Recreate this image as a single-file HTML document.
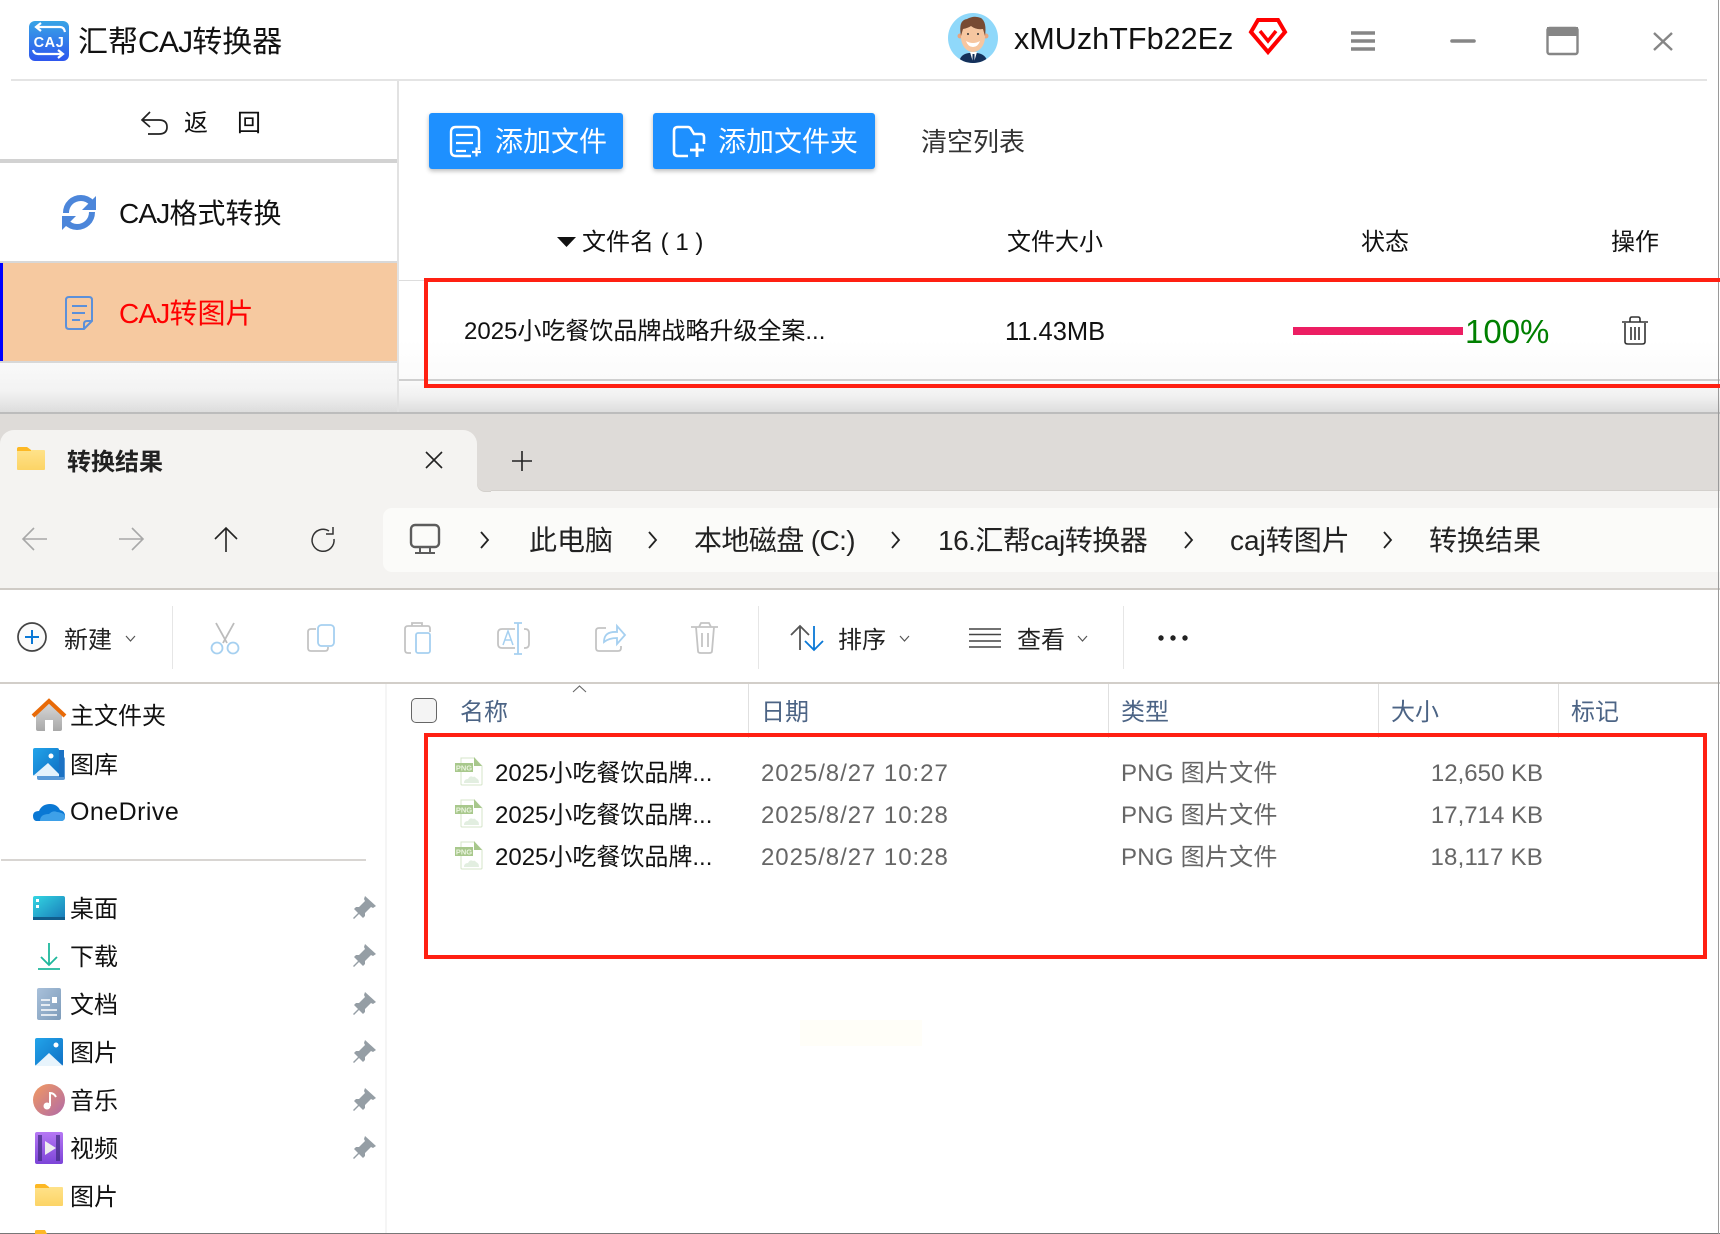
<!DOCTYPE html>
<html lang="zh"><head><meta charset="utf-8"><title>汇帮CAJ转换器</title>
<style>
html,body{margin:0;padding:0;background:#fff}
#p{position:relative;width:1720px;height:1234px;overflow:hidden;background:#fff;font-family:"Liberation Sans","Noto Sans CJK SC",sans-serif;color:#111}
.t{position:absolute;white-space:nowrap;line-height:1}
.b{position:absolute}
.n{letter-spacing:-.8px}
svg{position:absolute;left:0;top:0}
</style></head><body><div id="p">
<!-- app backgrounds -->
<div class="b" style="left:11px;top:79px;width:1696px;height:2px;background:#e4e4e4"></div>
<div class="b" style="left:0;top:159px;width:397px;height:4px;background:#d2d2d2"></div>
<div class="b" style="left:0;top:261px;width:397px;height:2px;background:#d8d8d8"></div>
<div class="b" style="left:0;top:263px;width:397px;height:98px;background:#f6c9a0"></div>
<div class="b" style="left:0;top:263px;width:3px;height:98px;background:#0000ff"></div>
<div class="b" style="left:0;top:361px;width:397px;height:2px;background:#d8d8d8"></div>
<div class="b" style="left:0;top:363px;width:397px;height:50px;background:linear-gradient(#f9f9f9,#f3f3f3 55%,#dcdcdc)"></div>
<div class="b" style="left:397px;top:81px;width:2px;height:332px;background:#e2e2e2"></div>
<div class="b" style="left:399px;top:280px;width:1321px;height:1px;background:#ddd"></div>
<div class="b" style="left:399px;top:379px;width:1321px;height:2px;background:#cfcfcf"></div>
<div class="b" style="left:399px;top:381px;width:1321px;height:32px;background:linear-gradient(#fafafa,#f0f0f0 50%,#dcdcdc)"></div>
<div class="b" style="left:399px;top:340px;width:1321px;height:39px;background:linear-gradient(#fff,#fbfbfb)"></div>
<div class="b" style="left:0;top:412px;width:1720px;height:2px;background:#bcbcbc"></div>
<!-- buttons -->
<div class="b" style="left:429px;top:113px;width:194px;height:56px;border-radius:3px;background:#1e90ff;box-shadow:0 2px 5px rgba(0,0,0,.28)"></div>
<div class="b" style="left:653px;top:113px;width:222px;height:56px;border-radius:3px;background:#1e90ff;box-shadow:0 2px 5px rgba(0,0,0,.28)"></div>
<!-- explorer backgrounds -->
<div class="b" style="left:0;top:414px;width:1720px;height:174px;background:#f4f3f1"></div>
<div class="b" style="left:0;top:414px;width:1720px;height:77px;background:#dedbd8"></div>
<div class="b" style="left:0;top:430px;width:477px;height:61px;background:#f4f3f1;border-radius:14px 14px 0 0"></div>
<div class="b" style="left:477px;top:470px;width:14px;height:21px;background:#f4f3f1"></div>
<div class="b" style="left:477px;top:470px;width:14px;height:21px;background:#dedbd8;border-radius:0 0 0 8px;box-shadow:0 1px 0 #d3d0cc"></div>
<div class="b" style="left:491px;top:490px;width:1229px;height:1px;background:#d3d0cc"></div>
<div class="b" style="left:383px;top:508px;width:1345px;height:64px;border-radius:9px;background:#fbfbf9"></div>
<div class="b" style="left:0;top:588px;width:1720px;height:2px;background:#cfcbc6"></div>
<div class="b" style="left:0;top:682px;width:1720px;height:2px;background:#d2cec9"></div>
<div class="b" style="left:172px;top:606px;width:1px;height:63px;background:#e6e6e6"></div>
<div class="b" style="left:758px;top:606px;width:1px;height:63px;background:#e6e6e6"></div>
<div class="b" style="left:1123px;top:606px;width:1px;height:63px;background:#e6e6e6"></div>
<div class="b" style="left:385px;top:684px;width:2px;height:550px;background:#f5f5f5"></div>
<div class="b" style="left:1px;top:859px;width:365px;height:2px;background:#d8d5d2"></div>
<div class="b" style="left:748px;top:684px;width:1px;height:54px;background:#e0e0e0"></div>
<div class="b" style="left:1108px;top:684px;width:1px;height:54px;background:#e0e0e0"></div>
<div class="b" style="left:1378px;top:684px;width:1px;height:54px;background:#e0e0e0"></div>
<div class="b" style="left:1558px;top:684px;width:1px;height:54px;background:#e0e0e0"></div>
<div class="b" style="left:411px;top:698px;width:24px;height:23px;border:1.5px solid #666;border-radius:5px;background:#f4f4f4"></div>
<div class="b" style="left:800px;top:1020px;width:122px;height:26px;background:#fffef8"></div>
<div class="b" style="left:0;top:1233px;width:1720px;height:1px;background:#777"></div>
<div class="b" style="left:1718px;top:0;width:1px;height:1234px;background:#9a9a9a"></div>
<!-- red boxes -->
<div class="b" style="left:424px;top:278px;width:1300px;height:102px;border:4px solid #ff2012"></div>
<div class="b" style="left:424px;top:733px;width:1275px;height:218px;border:4px solid #ff2012"></div>

<!-- texts -->
<span class="t" style="left:78px;top:28px;font-size:30px"><span>汇帮</span><span class="n">CAJ</span>转换器</span>
<span class="t" style="left:184px;top:112px;font-size:24px">返</span>
<span class="t" style="left:237px;top:112px;font-size:24px">回</span>
<span class="t" style="left:119px;top:200px;font-size:28px"><span class="n">CAJ</span>格式转换</span>
<span class="t" style="left:119px;top:300px;font-size:28px;color:#ff0000"><span class="n">CAJ</span>转图片</span>
<span class="t" style="left:495px;top:128px;font-size:28px;color:#fff">添加文件</span>
<span class="t" style="left:718px;top:128px;font-size:28px;color:#fff">添加文件夹</span>
<span class="t" style="left:921px;top:129px;font-size:26px;color:#333">清空列表</span>
<span class="t" style="left:1014px;top:24px;font-size:30.6px">xMUzhTFb22Ez</span>
<span class="t" style="left:582px;top:231px;font-size:24px">文件名 ( 1 )</span>
<span class="t" style="left:1007px;top:231px;font-size:24px">文件大小</span>
<span class="t" style="left:1361px;top:231px;font-size:24px">状态</span>
<span class="t" style="left:1611px;top:231px;font-size:24px">操作</span>
<span class="t" style="left:464px;top:320px;font-size:24px">2025小吃餐饮品牌战略升级全案...</span>
<span class="t" style="left:1005px;top:320px;font-size:25.5px">11.43MB</span>
<span class="t" style="left:1465px;top:315px;font-size:33px;color:#008000">100%</span>

<span class="t" style="left:67px;top:451px;font-size:24px;font-weight:bold;color:#222">转换结果</span>
<span class="t" style="left:529px;top:527px;font-size:28px;color:#222">此电脑</span>
<span class="t" style="left:694px;top:527px;font-size:28px;color:#222;letter-spacing:-.6px">本地磁盘 (C:)</span>
<span class="t" style="left:938px;top:527px;font-size:28px;color:#222;letter-spacing:-.5px">16.汇帮caj转换器</span>
<span class="t" style="left:1230px;top:527px;font-size:28px;color:#222">caj转图片</span>
<span class="t" style="left:1429px;top:527px;font-size:28px;color:#222">转换结果</span>

<span class="t" style="left:64px;top:629px;font-size:24px;color:#222">新建</span>
<span class="t" style="left:838px;top:629px;font-size:24px;color:#222">排序</span>
<span class="t" style="left:1017px;top:629px;font-size:24px;color:#222">查看</span>

<span class="t" style="left:460px;top:701px;font-size:24px;color:#4c6485">名称</span>
<span class="t" style="left:761px;top:701px;font-size:24px;color:#4c6485">日期</span>
<span class="t" style="left:1121px;top:701px;font-size:24px;color:#4c6485">类型</span>
<span class="t" style="left:1391px;top:701px;font-size:24px;color:#4c6485">大小</span>
<span class="t" style="left:1571px;top:701px;font-size:24px;color:#4c6485">标记</span>

<span class="t" style="left:495px;top:762px;font-size:24px">2025小吃餐饮品牌...</span>
<span class="t" style="left:495px;top:804px;font-size:24px">2025小吃餐饮品牌...</span>
<span class="t" style="left:495px;top:846px;font-size:24px">2025小吃餐饮品牌...</span>
<span class="t" style="left:761px;top:762px;font-size:24px;color:#666;letter-spacing:.95px">2025/8/27 10:27</span>
<span class="t" style="left:761px;top:804px;font-size:24px;color:#666;letter-spacing:.95px">2025/8/27 10:28</span>
<span class="t" style="left:761px;top:846px;font-size:24px;color:#666;letter-spacing:.95px">2025/8/27 10:28</span>
<span class="t" style="left:1121px;top:762px;font-size:24px;color:#666;letter-spacing:.25px">PNG 图片文件</span>
<span class="t" style="left:1121px;top:804px;font-size:24px;color:#666;letter-spacing:.25px">PNG 图片文件</span>
<span class="t" style="left:1121px;top:846px;font-size:24px;color:#666;letter-spacing:.25px">PNG 图片文件</span>
<span class="t" style="left:1343px;width:200px;text-align:right;top:762px;font-size:24px;color:#666">12,650 KB</span>
<span class="t" style="left:1343px;width:200px;text-align:right;top:804px;font-size:24px;color:#666">17,714 KB</span>
<span class="t" style="left:1343px;width:200px;text-align:right;top:846px;font-size:24px;color:#666;letter-spacing:.25px">18,117 KB</span>

<span class="t" style="left:70px;top:705px;font-size:24px">主文件夹</span>
<span class="t" style="left:70px;top:754px;font-size:24px">图库</span>
<span class="t" style="left:70px;top:800px;font-size:25px;letter-spacing:.45px">OneDrive</span>
<span class="t" style="left:70px;top:898px;font-size:24px">桌面</span>
<span class="t" style="left:70px;top:946px;font-size:24px">下载</span>
<span class="t" style="left:70px;top:994px;font-size:24px">文档</span>
<span class="t" style="left:70px;top:1042px;font-size:24px">图片</span>
<span class="t" style="left:70px;top:1090px;font-size:24px">音乐</span>
<span class="t" style="left:70px;top:1138px;font-size:24px">视频</span>
<span class="t" style="left:70px;top:1186px;font-size:24px">图片</span>

<svg width="1720" height="1234" viewBox="0 0 1720 1234" fill="none">
<defs>
<linearGradient id="lg" x1="0" y1="0" x2="0" y2="1"><stop offset="0" stop-color="#38a4e6"/><stop offset="1" stop-color="#2e56ee"/></linearGradient>
<linearGradient id="fo" x1="0" y1="0" x2="0" y2="1"><stop offset="0" stop-color="#ffe48f"/><stop offset="1" stop-color="#fcd466"/></linearGradient>
<linearGradient id="dk" x1="0" y1="0" x2="1" y2="1"><stop offset="0" stop-color="#33d6e2"/><stop offset="1" stop-color="#1878b8"/></linearGradient>
<linearGradient id="mu" x1="0" y1="0" x2="1" y2="1"><stop offset="0" stop-color="#f29a60"/><stop offset="1" stop-color="#b06aa8"/></linearGradient>
<linearGradient id="hm" x1="0" y1="0" x2="0" y2="1"><stop offset="0" stop-color="#d8d8d8"/><stop offset="1" stop-color="#a8a8a8"/></linearGradient>
<linearGradient id="dc" x1="0" y1="0" x2="1" y2="1"><stop offset="0" stop-color="#a8c0da"/><stop offset="1" stop-color="#7e9cba"/></linearGradient>
<linearGradient id="vd" x1="0" y1="0" x2="0" y2="1"><stop offset="0" stop-color="#b678f4"/><stop offset="1" stop-color="#7c44d8"/></linearGradient>
<linearGradient id="pic" x1="0" y1="0" x2="1" y2="1"><stop offset="0" stop-color="#22a4ea"/><stop offset="1" stop-color="#1070c4"/></linearGradient>
<clipPath id="av"><circle cx="973" cy="38" r="25"/></clipPath>
</defs>
<!-- logo -->
<rect x="29" y="21" width="40" height="40" rx="6" fill="url(#lg)"/>
<text x="49" y="47" text-anchor="middle" font-family="Liberation Sans" font-weight="bold" font-size="14.5" letter-spacing=".6" fill="#fff">CAJ</text>
<path d="M37 27h23q4 0 5 5M41 23l-5 4 5 4" stroke="#fff" stroke-width="2.200"/>
<path d="M33 50q1 4 5 4h23M58 50l5 4-5 4" stroke="#fff" stroke-width="2.200"/>
<!-- back arrow -->
<path d="M150 112l-8 8 8 7M142 120h17q8 0 8 7t-8 7h-11" stroke="#222" stroke-width="1.700"/>
<!-- refresh -->
<path d="M66 213c0-9 7-15 15-15 5 0 8 2 11 5" stroke="#4c86da" stroke-width="6"/>
<path d="M96 196v14h-14z" fill="#4c86da"/>
<path d="M92 212c0 9-7 15-15 15-5 0-8-2-11-5" stroke="#4c86da" stroke-width="6"/>
<path d="M62 230v-14h14z" fill="#4c86da"/>
<!-- doc -->
<path d="M84 329H69q-3 0-3-3V300q0-3 3-3h20q3 0 3 3v21zM92 321h-5q-3 0-3 3v5" stroke="#5b90da" stroke-width="2"/>
<path d="M72 306h15M72 313h13M72 320h8" stroke="#5b90da" stroke-width="2"/>
<!-- btn icons -->
<path d="M471 156h-15q-5 0-5-5v-19q0-5 5-5h18q5 0 5 5v18" stroke="#fff" stroke-width="2.400"/>
<path d="M456 135h17M456 143h17M456 151h10M472 152h9M476.500 147.500v9" stroke="#fff" stroke-width="2.200"/>
<path d="M688 156h-10q-4 0-4-4v-21q0-4 4-4h10q2 0 3 2l3 5h7q3 0 3 3v7" stroke="#fff" stroke-width="2.600"/>
<path d="M690 150h14M697 143v14" stroke="#fff" stroke-width="2.800"/>
<!-- avatar -->
<circle cx="973" cy="38" r="25" fill="#8fd8fa"/>
<g clip-path="url(#av)">
<path d="M959 65q0-11 10-12h8q10 1 11 12z" fill="#14305a"/>
<path d="M970 52l3.500 12 3.500-12z" fill="#fff"/><path d="M972.500 54h2v10h-2z" fill="#14305a"/>
<circle cx="960" cy="36" r="2.500" fill="#e8a57e"/><circle cx="986" cy="36" r="2.500" fill="#e8a57e"/>
<ellipse cx="973" cy="37" rx="12" ry="15" fill="#f6c6a0"/>
<path d="M961 36q-3-16 6-17 7-4 14-1 6 4 4 18l-2-7q-7 1-12-3-3 2-8 3z" fill="#774a33"/>
<path d="M966 41q7 4 14 0-2 6-7 6t-7-6z" fill="#fff"/>
<circle cx="968" cy="34" r="1" fill="#333"/><circle cx="978" cy="34" r="1" fill="#333"/>
</g>
<!-- diamond -->
<path d="M1258 20h20l7 12-17 20-17-20z" stroke="#ff0000" stroke-width="4" fill="#fff"/>
<path d="M1260 31l8 10 8-10" stroke="#ff0000" stroke-width="3.500"/>
<!-- window controls -->
<path d="M1351 33h24M1351 41h24M1351 49h24" stroke="#868686" stroke-width="3.600"/>
<path d="M1452 41h22" stroke="#868686" stroke-width="3.600" stroke-linecap="round"/>
<rect x="1547.500" y="28" width="30" height="26" rx="2" stroke="#868686" stroke-width="2.400"/><rect x="1547" y="27" width="31" height="9" fill="#868686"/>
<path d="M1654 33l18 17M1672 33l-18 17" stroke="#868686" stroke-width="2.400"/>
<!-- header triangle -->
<path d="M557 237h19l-9.500 10z" fill="#111"/>
<!-- progress -->
<rect x="1293" y="327" width="170" height="8" fill="#ec1e63"/>
<!-- trash -->
<path d="M1622 322h26M1630 322v-3q0-2 2-2h6q2 0 2 2v3M1625 323v19q0 2 3 2h14q3 0 3-2v-19M1631 327v13M1635 327v13M1639 327v13" stroke="#333" stroke-width="1.600"/>
<!-- tab icons -->
<path d="M17 449q0-2 2-2h8l4 3h13q1 0 1 1v18q0 1-1 1H18q-1 0-1-1z" fill="url(#fo)"/>
<path d="M17 449q0-2 2-2h8l4 3v1H17z" fill="#fdb824"/>
<path d="M426 452l16 16M442 452l-16 16M522 451v20M512 461h20" stroke="#222" stroke-width="1.600"/>
<!-- nav -->
<path d="M23 539h24M34 528l-11 11 11 11" stroke="#a8a8a8" stroke-width="1.600"/>
<path d="M119 539h24M132 528l11 11-11 11" stroke="#a8a8a8" stroke-width="1.600"/>
<path d="M226 552v-24M215 539l11-11 11 11" stroke="#222" stroke-width="1.600"/>
<path d="M329 531a11 11 0 1 0 5 8M333 527v7h-7" stroke="#333" stroke-width="1.500"/>
<rect x="411" y="525" width="28" height="22" rx="4" stroke="#5c5c5c" stroke-width="2.400"/>
<path d="M420 547v5M430 547v5M415 553h20" stroke="#5c5c5c" stroke-width="2"/>
<path d="M481 532l7 8-7 8M649 532l7 8-7 8M892 532l7 8-7 8M1185 532l7 8-7 8M1384 532l7 8-7 8" stroke="#222" stroke-width="1.800"/>
<!-- toolbar -->
<circle cx="32" cy="637" r="14" stroke="#444" stroke-width="1.700" fill="#fbfbfb"/>
<path d="M32 630v14M25 637h14" stroke="#0a78d6" stroke-width="2"/>
<path d="M126 636l4.500 5 4.500-5M900 636l4.500 5 4.500-5M1078 636l4.500 5 4.500-5" stroke="#555" stroke-width="1.200"/>
<path d="M216 623l11 20M234 623l-11 20" stroke="#bcbcbc" stroke-width="1.800"/>
<circle cx="217" cy="648" r="5.500" stroke="#a6d0f0" stroke-width="1.800"/><circle cx="233" cy="648" r="5.500" stroke="#a6d0f0" stroke-width="1.800"/>
<path d="M316 629h-5q-3 0-3 3v16q0 3 3 3h14q3 0 3-3v-1" stroke="#c4c4c4" stroke-width="1.800"/>
<rect x="318" y="625" width="16" height="21" rx="3.500" stroke="#a6d0f0" stroke-width="1.800"/>
<path d="M411 653h-3q-3 0-3-3v-21q0-3 3-3h20q2 0 2 3v3M412 626v-3h10v3" stroke="#c4c4c4" stroke-width="1.800"/>
<rect x="416" y="633" width="14" height="20" rx="2" stroke="#a6d0f0" stroke-width="1.800"/>
<path d="M515 629h-13q-4 0-4 4v11q0 4 4 4h13M524 629h1q4 0 4 4v11q0 4-4 4h-1" stroke="#c4c4c4" stroke-width="1.800"/>
<path d="M518 623v31M514 623h8M514 654h8" stroke="#a6d0f0" stroke-width="1.800"/>
<path d="M503 645l5-14 5 14M505 640h6" stroke="#a6d0f0" stroke-width="1.500"/>
<path d="M606 628h-7q-3 0-3 3v17q0 3 3 3h19q3 0 3-3v-2" stroke="#c4c4c4" stroke-width="1.800"/>
<path d="M604 642q0-11 13-10v-6l8 9-8 9v-6q-8 0-13 4z" stroke="#a6d0f0" stroke-width="1.800"/>
<path d="M691 627h27M696 627l2 24q0 2 3 2h8q3 0 3-2l2-24M702 633v14M708 633v14M699 627l2-4h8l2 4" stroke="#c4c4c4" stroke-width="1.800"/>
<path d="M800 650v-24M791 635l9-9 9 9" stroke="#555" stroke-width="1.800"/>
<path d="M814 626v24M805 641l9 9 9-9" stroke="#0a78d6" stroke-width="1.800"/>
<path d="M969 629h32M969 634.500h32M969 641h32M969 647h32" stroke="#444" stroke-width="1.500"/>
<circle cx="1161" cy="638" r="2.700" fill="#222"/><circle cx="1173" cy="638" r="2.700" fill="#222"/><circle cx="1185" cy="638" r="2.700" fill="#222"/>
<!-- caret -->
<path d="M573 692l6.500-6 6.500 6" stroke="#666" stroke-width="1.100"/>
<!-- png icons -->
<g>
<path d="M461 758h13l8 8v18q0 1-1 1h-19q-1 0-1-1z" fill="#fff" stroke="#d4e4c8" stroke-width="1"/>
<path d="M474 757l8 9h-8z" fill="#a8c88c"/>
<rect x="455" y="763" width="18" height="9" fill="#a8c88c"/>
<text x="464" y="770.500" text-anchor="middle" font-family="Liberation Sans" font-size="7.500" font-weight="bold" fill="#eaf4e0">PNG</text>
<path d="M464 783q0-4 4-4 2-4 5-2 2-1 3 1 3 1 3 5z" fill="#e2eee0"/>
</g>
<g transform="translate(0 42)">
<path d="M461 758h13l8 8v18q0 1-1 1h-19q-1 0-1-1z" fill="#fff" stroke="#d4e4c8" stroke-width="1"/>
<path d="M474 757l8 9h-8z" fill="#a8c88c"/>
<rect x="455" y="763" width="18" height="9" fill="#a8c88c"/>
<text x="464" y="770.500" text-anchor="middle" font-family="Liberation Sans" font-size="7.500" font-weight="bold" fill="#eaf4e0">PNG</text>
<path d="M464 783q0-4 4-4 2-4 5-2 2-1 3 1 3 1 3 5z" fill="#e2eee0"/>
</g>
<g transform="translate(0 84)">
<path d="M461 758h13l8 8v18q0 1-1 1h-19q-1 0-1-1z" fill="#fff" stroke="#d4e4c8" stroke-width="1"/>
<path d="M474 757l8 9h-8z" fill="#a8c88c"/>
<rect x="455" y="763" width="18" height="9" fill="#a8c88c"/>
<text x="464" y="770.500" text-anchor="middle" font-family="Liberation Sans" font-size="7.500" font-weight="bold" fill="#eaf4e0">PNG</text>
<path d="M464 783q0-4 4-4 2-4 5-2 2-1 3 1 3 1 3 5z" fill="#e2eee0"/>
</g>
<!-- sidebar icons -->
<path d="M36 714l13-11 13 11v15q0 2-2 2h-7v-11h-8v11h-7q-2 0-2-2z" fill="url(#hm)"/>
<path d="M33 716l16-15 16 15" stroke="#e86a08" stroke-width="4"/>
<rect x="37" y="757" width="28" height="23" rx="2" fill="#5a9ad8"/>
<rect x="33" y="748" width="26" height="28" rx="2" fill="url(#pic)"/>
<path d="M33 776l15-13 13 13z" fill="#e4f2fc"/><circle cx="51" cy="756" r="2.500" fill="#fff"/>
<rect x="59" y="750" width="5" height="27" fill="#1c72c4"/>
<path d="M36 821q-3-1-3-5 0-5 6-5 3-7 11-7 7 0 10 6 5 1 5 6 0 5-4 5z" fill="#0a78d4"/>
<path d="M40 821q0-7 9-7 4-4 8-2 8 1 8 5 0 4-4 4z" fill="#3ea0e8"/>
<rect x="33" y="896" width="32" height="24" rx="2" fill="url(#dk)"/><rect x="33" y="917" width="32" height="3" fill="#115d8c"/>
<rect x="36" y="899" width="3" height="3" fill="#fff"/><rect x="36" y="905" width="3" height="3" fill="#fff"/>
<path d="M49 943v22M41 957l8 8 8-8M38 969h22" stroke="#1fb89c" stroke-width="1.800"/>
<rect x="37" y="988" width="24" height="32" rx="2" fill="url(#dc)"/>
<path d="M41 1000h9M41 1005h9M41 1010h16M41 1015h16" stroke="#fff" stroke-width="1.500"/><rect x="52" y="997" width="5" height="6" fill="#fff"/>
<rect x="35" y="1038" width="28" height="28" rx="2" fill="url(#pic)"/>
<path d="M35 1066l14-13 14 13z" fill="#e8f4fc"/><circle cx="56" cy="1045" r="2.500" fill="#fff"/>
<circle cx="49" cy="1100" r="16" fill="url(#mu)"/>
<path d="M50 1106v-13q4 0 6 4" stroke="#fff" stroke-width="2"/><circle cx="47" cy="1106" r="3.500" fill="#fff"/>
<rect x="35" y="1132" width="28" height="32" rx="2" fill="url(#vd)"/>
<rect x="38" y="1135" width="4" height="26" fill="#3e2a80" opacity=".7"/><rect x="56" y="1135" width="4" height="26" fill="#3e2a80" opacity=".7"/>
<path d="M45 1141l11 7-11 7z" fill="#eee"/>
<path d="M35 1186q0-2 2-2h8l4 3h13q1 0 1 1v17q0 1-1 1H36q-1 0-1-1z" fill="url(#fo)"/>
<path d="M35 1186q0-2 2-2h8l4 3v1H35z" fill="#fdb824"/>
<path d="M35 1234v-3q0-1 2-1h8l2 4z" fill="#fdb824"/>
<!-- pins -->
<g fill="#959ea5" transform="translate(1 -2)">
<path d="M364 898l11 10-3 2-2-1-6 6 0 3-2 2-4-4-5 5-1-1 5-5-4-4 2-2 3 0 6-6-1-2z"/>
<path d="M364 946l11 10-3 2-2-1-6 6 0 3-2 2-4-4-5 5-1-1 5-5-4-4 2-2 3 0 6-6-1-2z"/>
<path d="M364 994l11 10-3 2-2-1-6 6 0 3-2 2-4-4-5 5-1-1 5-5-4-4 2-2 3 0 6-6-1-2z"/>
<path d="M364 1042l11 10-3 2-2-1-6 6 0 3-2 2-4-4-5 5-1-1 5-5-4-4 2-2 3 0 6-6-1-2z"/>
<path d="M364 1090l11 10-3 2-2-1-6 6 0 3-2 2-4-4-5 5-1-1 5-5-4-4 2-2 3 0 6-6-1-2z"/>
<path d="M364 1138l11 10-3 2-2-1-6 6 0 3-2 2-4-4-5 5-1-1 5-5-4-4 2-2 3 0 6-6-1-2z"/>
</g>
</svg>
</div></body></html>
